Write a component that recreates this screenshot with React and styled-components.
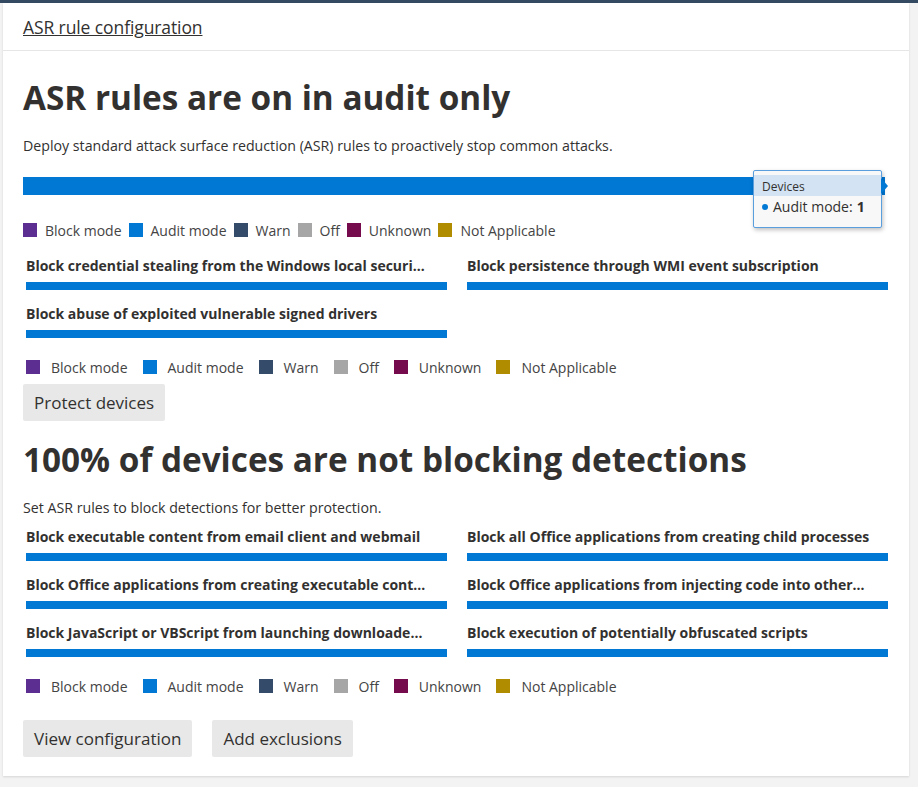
import React from 'react'
import styled, { createGlobalStyle } from 'styled-components'

const GlobalStyle = createGlobalStyle`
    body {
        margin:0;
        background-color:#f3f3f3;
        font-family:"Segoe UI", "Open Sans", "Noto Sans", sans-serif;
        color:#323130;
    }
`;

const LEGEND = [
    { label: 'Block mode', color: '#5c2e91' },
    { label: 'Audit mode', color: '#0078d4' },
    { label: 'Warn', color: '#344b6a' },
    { label: 'Off', color: '#a6a6a6' },
    { label: 'Unknown', color: '#750b4c' },
    { label: 'Not Applicable', color: '#b08c00' },
]

const AUDIT_RULES = [
    'Block credential stealing from the Windows local securi…',
    'Block persistence through WMI event subscription',
    'Block abuse of exploited vulnerable signed drivers',
]

const BLOCK_RULES = [
    'Block executable content from email client and webmail',
    'Block all Office applications from creating child processes',
    'Block Office applications from creating executable cont…',
    'Block Office applications from injecting code into other…',
    'Block JavaScript or VBScript from launching downloade…',
    'Block execution of potentially obfuscated scripts',
]

function Legend({ wide }) {
    return (
        <LegendRow wide={wide}>
            {LEGEND.map((item) =>
                <LegendItem key={item.label} wide={wide}>
                    <Swatch color={item.color} />
                    {item.label}
                </LegendItem>
            )}
        </LegendRow>
    )
}

function RuleGrid({ rules, top }) {
    return (
        <Grid top={top}>
            {rules.map((rule) =>
                <Rule key={rule}>
                    <RuleName>{rule}</RuleName>
                    <RuleBar />
                </Rule>
            )}
        </Grid>
    )
}

export default function App() {
    return (
        <>
            <GlobalStyle />
            <TopLine />
            <Page>
                <Card>
                    <CardHeader>
                        <HeaderLink>ASR rule configuration</HeaderLink>
                    </CardHeader>
                    <CardBody>
                        <Title>ASR rules are on in audit only</Title>
                        <Description>Deploy standard attack surface reduction (ASR) rules to proactively stop common attacks.</Description>
                        <ChartWrap>
                            <TotalBar />
                            <Tooltip>
                                <TooltipHead>Devices</TooltipHead>
                                <TooltipBody>
                                    <Dot />Audit mode: <b>1</b>
                                </TooltipBody>
                            </Tooltip>
                        </ChartWrap>
                        <Legend />
                        <RuleGrid rules={AUDIT_RULES} top={15} />
                        <Legend wide />
                        <Buttons>
                            <Button>Protect devices</Button>
                        </Buttons>

                        <Title second>100% of devices are not blocking detections</Title>
                        <Description>Set ASR rules to block detections for better protection.</Description>
                        <RuleGrid rules={BLOCK_RULES} top={8} />
                        <Legend wide />
                        <Buttons bottom>
                            <Button>View configuration</Button>
                            <Button>Add exclusions</Button>
                        </Buttons>
                    </CardBody>
                </Card>
            </Page>
        </>
    )
}

const TopLine = styled.div`
    height:3px;
    background-color:#344a63;
`;

const Page = styled.div`
    padding:0 9px 12px 3px;
`;

const Card = styled.div`
    background-color:white;
    box-shadow:0 1px 2px rgba(0,0,0,0.12);
`;

const CardHeader = styled.div`
    height:47px;
    display:flex;
    align-items:center;
    padding:0 20px;
    border-bottom:1px solid #e6e6e6;
`;

const HeaderLink = styled.a`
    font-size:17.5px;
    color:#323130;
    text-decoration:underline;
    letter-spacing:-0.1px;
`;

const CardBody = styled.div`
    padding:0 21px 19px 20px;
`;

const Title = styled.h1`
    margin:${props => props.second ? '15px' : '23px'} 0 0 0;
    font-size:33.3px;
    line-height:46px;
    font-weight:700;
    color:#323130;
`;

const Description = styled.p`
    margin:16px 0 0;
    font-size:14.2px;
    line-height:20px;
`;

const ChartWrap = styled.div`
    position:relative;
    margin:21px 3px 0 0;
`;

const TotalBar = styled.div`
    height:18px;
    background-color:#0078d4;
`;

const Tooltip = styled.div`
    position:absolute;
    top:-7px;
    right:3px;
    width:127px;
    height:56px;
    border:1px solid #5a9ede;
    border-radius:2px;
    background-color:#f8f8f8;
    box-shadow:1px 2px 4px rgba(0,0,0,0.25);
    &::after {
        content:'';
        position:absolute;
        top:7px;
        right:-7px;
        border-top:8px solid transparent;
        border-bottom:8px solid transparent;
        border-left:7px solid #0078d4;
    }
`;

const TooltipHead = styled.div`
    margin-top:4px;
    height:21px;
    padding:0 8px;
    background-color:#d3e3f3;
    font-size:12px;
    line-height:24px;
`;

const TooltipBody = styled.div`
    padding:0 8px;
    font-size:14px;
    line-height:22px;
    display:flex;
    align-items:center;
    b { margin-left:4px; }
`;

const Dot = styled.span`
    width:6px;
    height:6px;
    margin-right:5px;
    border-radius:50%;
    background-color:#0078d4;
`;

const LegendRow = styled.div`
    display:flex;
    gap:${props => props.wide ? '15px' : '7px'};
    margin:${props => props.wide ? '4px 0 0 3px' : '25px 0 0 0'};
    height:${props => props.wide ? '24px' : '20px'};
`;

const LegendItem = styled.div`
    display:flex;
    align-items:center;
    gap:${props => props.wide ? '11px' : '8px'};
    font-size:14px;
    color:#444;
`;

const Swatch = styled.span`
    width:14px;
    height:14px;
    background-color:${props => props.color};
`;

const Grid = styled.div`
    display:grid;
    grid-template-columns:1fr 1fr;
    column-gap:20px;
    margin:${props => props.top}px 0 0 3px;
`;

const Rule = styled.div`
    padding-bottom:13px;
`;

const RuleName = styled.div`
    font-size:14px;
    line-height:22px;
    font-weight:700;
    color:#323130;
    white-space:nowrap;
    overflow:hidden;
`;

const RuleBar = styled.div`
    margin-top:5px;
    height:8px;
    background-color:#0078d4;
`;

const Buttons = styled.div`
    display:flex;
    gap:20px;
    margin-top:${props => props.bottom ? '22px' : '5px'};
`;

const Button = styled.button`
    border:0;
    outline:none;
    height:37px;
    padding:0 11px;
    border-radius:2px;
    background-color:#e8e8e8;
    font-family:inherit;
    font-size:17px;
    color:#323130;
`;
